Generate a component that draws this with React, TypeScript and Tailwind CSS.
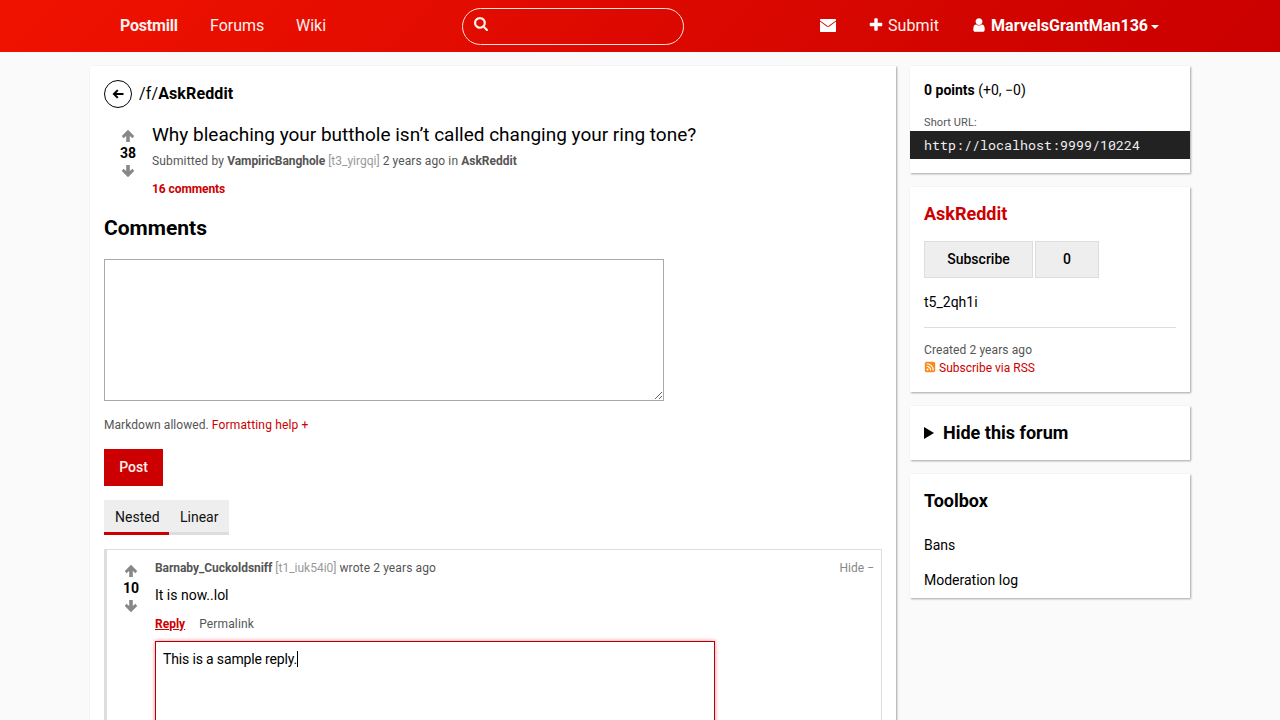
import type { ReactNode } from "react";

function SearchIcon() {
  return (
    <svg viewBox="64 128 1664 1664" className="block h-[14px] w-[14px] shrink-0 fill-current">
      <path d="M1216 832q0-185-131.5-316.5t-316.5-131.5-316.5 131.5-131.5 316.5 131.5 316.5 316.5 131.5 316.5-131.5 131.5-316.5zm512 832q0 52-38 90t-90 38q-54 0-90-38l-343-342q-179 124-399 124-143 0-273.5-55.5t-225-150-150-225-55.5-273.5 55.5-273.5 150-225 225-150 273.5-55.5 273.5 55.5 225 150 150 225 55.5 273.5q0 220-124 399l343 343q37 37 37 90z" />
    </svg>
  );
}

function MailIcon() {
  return (
    <svg viewBox="0 0 16 16" className="block h-4 w-4 shrink-0 fill-current">
      <path d="M.7 2h14.6q.7 0 .7.700v.8L8.700 8.700q-.7.5-1.400 0L0 3.500v-.8Q0 2 .7 2zM0 4.500l6.700 4.900q1.300.9 2.600 0L16 4.500v9.700q0 .8-.8.800H.8q-.8 0-.8-.8z" />
    </svg>
  );
}

function PlusIcon() {
  return (
    <svg viewBox="0 0 1792 1792" className="block h-4 w-4 shrink-0 fill-current">
      <path d="M1600 736v192q0 40-28 68t-68 28h-416v416q0 40-28 68t-68 28h-192q-40 0-68-28t-28-68v-416h-416q-40 0-68-28t-28-68v-192q0-40 28-68t68-28h416v-416q0-40 28-68t68-28h192q40 0 68 28t28 68v416h416q40 0 68 28t28 68z" />
    </svg>
  );
}

function UserIcon() {
  return (
    <svg viewBox="0 0 1792 1792" className="block h-4 w-4 shrink-0 fill-current">
      <path d="M1536 1399q0 109-62.500 187t-150.500 78h-854q-88 0-150.500-78t-62.500-187q0-85 8.500-160.500t31.500-152 58.500-131 94-89 134.500-34.500q131 128 313 128t313-128q76 0 134.500 34.500t94 89 58.500 131 31.500 152 8.500 160.500zm-256-887q0 159-112.500 271.500t-271.500 112.500-271.500-112.500-112.500-271.500 112.500-271.500 271.500-112.500 271.500 112.500 112.500 271.500z" />
    </svg>
  );
}

function ArrowUp() {
  return (
    <svg viewBox="0 0 14 14" className="block h-[14px] w-[14px] fill-[#888]">
      <path d="M7 .8 13.200 7l-1.700 2.200-2.700-2.300v6.100H5.200V6.900L2.500 9.200.8 7z" />
    </svg>
  );
}

function ArrowDown() {
  return (
    <svg viewBox="0 0 14 14" className="block h-[14px] w-[14px] fill-[#888]">
      <path d="M7 13.200.8 7l1.700-2.200 2.700 2.300V1h3.600v6.100l2.700-2.300L13.200 7z" />
    </svg>
  );
}

function RssIcon() {
  return (
    <svg viewBox="0 0 12 12" className="block h-3 w-3 shrink-0">
      <rect x=".8" y=".8" width="10.400" height="10.400" rx="1.800" fill="#f78b1f" />
      <circle cx="3.500" cy="8.600" r="1" fill="#fff" />
      <path d="M2.600 5.300a4.100 4.100 0 0 1 4.100 4.100M2.600 2.800a6.600 6.600 0 0 1 6.600 6.600" fill="none" stroke="#fff" strokeWidth="1.100" />
    </svg>
  );
}

function Votes({ score }: { score: number }) {
  return (
    <div className="flex w-8 flex-col items-center">
      <ArrowUp />
      <span className="h-[21px] text-[14px] leading-5 font-bold">{score}</span>
      <ArrowDown />
    </div>
  );
}

function Card({ className, children }: { className: string; children: ReactNode }) {
  return <section className={`bg-white px-[14px] shadow-[1px_1px_2px_rgba(0,0,0,0.35)] ${className}`}>{children}</section>;
}

function Header() {
  return (
    <header className="h-[52px] bg-[linear-gradient(135deg,#f01200,#c90000)] text-[16px] leading-[52px] text-[#fff0ee]">
      <div className="flex h-full pl-[120px]">
        <a className="w-[90px] font-bold tracking-[-0.2px]">Postmill</a>
        <a className="w-[86px]">Forums</a>
        <a className="w-[166px]">Wiki</a>
        <div className="mt-2 flex h-[37px] w-[222px] rounded-full border border-[#ffe0dc] pt-[8px] pl-[11px]">
          <SearchIcon />
        </div>
        <a className="ml-[136px] flex w-12 pt-[17px] text-white">
          <MailIcon />
        </a>
        <a className="flex w-[103px]">
          <span className="mr-1 pt-[17px] text-white"><PlusIcon /></span>
          <span className="tracking-[0.1px]">Submit</span>
        </a>
        <a className="flex font-bold text-white">
          <span className="mr-1 pt-[17px]"><UserIcon /></span>
          <span className="tracking-[0.05px]">MarvelsGrantMan136</span>
          <span className="mt-[25px] ml-[3px] h-0 w-0 border-x-4 border-t-4 border-x-transparent border-t-white" />
        </a>
      </div>
    </header>
  );
}

function Submission() {
  return (
    <>
      <div className="flex h-7 items-center text-[16px]">
        <span className="mr-[7px] flex h-7 w-7 items-center justify-center rounded-full border border-black">
          <svg viewBox="0 0 12 12" className="h-3 w-3 fill-none stroke-black" strokeWidth="2">
            <path d="M11.500 6H2M5.800 2.100 1.900 6l3.900 3.900" />
          </svg>
        </span>
        <span className="pb-[2px] tracking-[0.12px]">/f/<b>AskReddit</b></span>
      </div>
      <div className="mt-[14px] flex h-[77px] pl-2">
        <div className="mt-[7px]"><Votes score={38} /></div>
        <div className="ml-2">
          <h1 className="text-[19px] leading-[25px]">Why bleaching your butthole isn’t called changing your ring tone?</h1>
          <p className="mt-[5px] text-[12px] leading-[18px] text-[#555]">
            <span className="tracking-[0.15px]">Submitted by </span><b className="tracking-[-0.06px]">VampiricBanghole</b> <span className="text-[#999]">[t3_yirgqi]</span> <span className="tracking-[0.1px]">2 years ago in </span><b>AskReddit</b>
          </p>
          <p className="mt-[10px] text-[12px] leading-[18px] font-bold tracking-[-0.08px] text-[#c00]">16 comments</p>
        </div>
      </div>
    </>
  );
}

function Comment() {
  return (
    <article className="mt-[14px] flex h-[260px] border border-l-[3px] border-[#ddd] pl-2">
      <div className="mt-[14px]"><Votes score={10} /></div>
      <div className="ml-2 min-w-0 flex-1 pr-[7px]">
        <div className="mt-[9px] flex justify-between text-[12px] leading-[18px] text-[#555]">
          <span><b className="tracking-[-0.05px]">Barnaby_Cuckoldsniff</b> <span className="text-[#999]">[t1_iuk54i0]</span> <span className="tracking-[0.11px]">wrote 2 years ago</span></span>
          <span className="text-[#888]">Hide −</span>
        </div>
        <p className="mt-[7px] leading-[22px]">It is now..lol</p>
        <div className="mt-[9px] flex gap-[14px] text-[12px] leading-[18px] text-[#555]">
          <b className="text-[#c00] underline">Reply</b>
          <span className="tracking-[0.15px]">Permalink</span>
        </div>
        <div className="mt-[8px] flex h-[142px] w-[560px] border border-[#b30010] pt-[7px] pl-[7px] leading-[21px] tracking-[-0.15px] shadow-[0_0_4px_rgba(255,0,0,0.5)]">
          This is a sample reply.
          <span className="mt-[2px] h-4 w-px bg-black" />
        </div>
      </div>
    </article>
  );
}

export default function App() {
  return (
    <div className="h-[720px] overflow-hidden bg-[#fafafa] font-[Roboto,sans-serif] text-[14px] leading-[21px] text-black">
      <Header />
      <div className="flex items-start gap-[14px] pt-[14px] pl-[90px]">
        <Card className="h-[760px] w-[806px] pt-[14px]">
          <Submission />
          <h2 className="mt-[14px] h-8 pt-[1px] text-[21px] leading-[28px] font-bold">Comments</h2>
          <textarea className="mt-[14px] block h-[142px] w-[560px] resize border border-[#aaa] bg-white" />
          <p className="mt-[15px] text-[12px] leading-[18px] text-[#555]">
            <span className="tracking-[0.06px]">Markdown allowed. </span><span className="tracking-[0.16px] text-[#c00]">Formatting help +</span>
          </p>
          <button className="mt-[15px] block h-[37px] w-[59px] bg-[#c00] font-medium text-[#fff0ee]">Post</button>
          <nav className="mt-[14px] flex h-[35px] text-[#111]">
            <a className="w-[65px] border-b-[3px] border-[#c00] bg-[#eee] pt-[7px] pl-[11px]">Nested</a>
            <a className="w-[60px] border-b-[3px] border-[#ddd] bg-[#eee] pt-[7px] pl-[11px]">Linear</a>
          </nav>
          <Comment />
        </Card>
        <aside className="flex w-[280px] flex-col gap-[14px]">
          <Card className="h-[107px] pt-[14px]">
            <p><b>0 points</b> (+0, −0)</p>
            <p className="mt-[13px] text-[11px] leading-[17px] tracking-[0.1px] text-[#555]">Short URL:</p>
            <p className="-mx-[14px] h-7 bg-[#222] px-[14px] font-['Roboto_Mono','Liberation_Mono',monospace] text-[13.333px] leading-[28px] text-[#eee]">
              http://localhost:9999/10224
            </p>
          </Card>
          <Card className="h-[205px] pt-[14px]">
            <h2 className="text-[18px] leading-[26px] font-bold text-[#c00]">AskReddit</h2>
            <div className="mt-[14px] flex h-[37px] gap-[2px] text-center leading-[35px] font-medium">
              <button className="w-[109px] border border-[#ddd] bg-[#eee]">Subscribe</button>
              <span className="w-16 border border-[#ddd] bg-[#eee]">0</span>
            </div>
            <p className="mt-[14px]">t5_2qh1i</p>
            <div className="mt-[14px] border-t border-[#ddd] pt-[13px] text-[12px] leading-[18px] text-[#555]">
              <p className="tracking-[0.1px]">Created 2 years ago</p>
              <p className="flex gap-[3px] text-[#c00]"><span className="pt-[2px]"><RssIcon /></span>Subscribe via RSS</p>
            </div>
          </Card>
          <Card className="flex h-[54px] items-center pb-[1px] text-[18px] font-bold">
            <span className="mr-[9px] h-0 w-0 border-y-[6px] border-l-[10px] border-y-transparent border-l-black" />
            Hide this forum
          </Card>
          <Card className="h-[124px] pt-[14px]">
            <h2 className="text-[18px] leading-[26px] font-bold">Toolbox</h2>
            <p className="mt-[21px]">Bans</p>
            <p className="mt-[14px]">Moderation log</p>
          </Card>
        </aside>
      </div>
    </div>
  );
}
